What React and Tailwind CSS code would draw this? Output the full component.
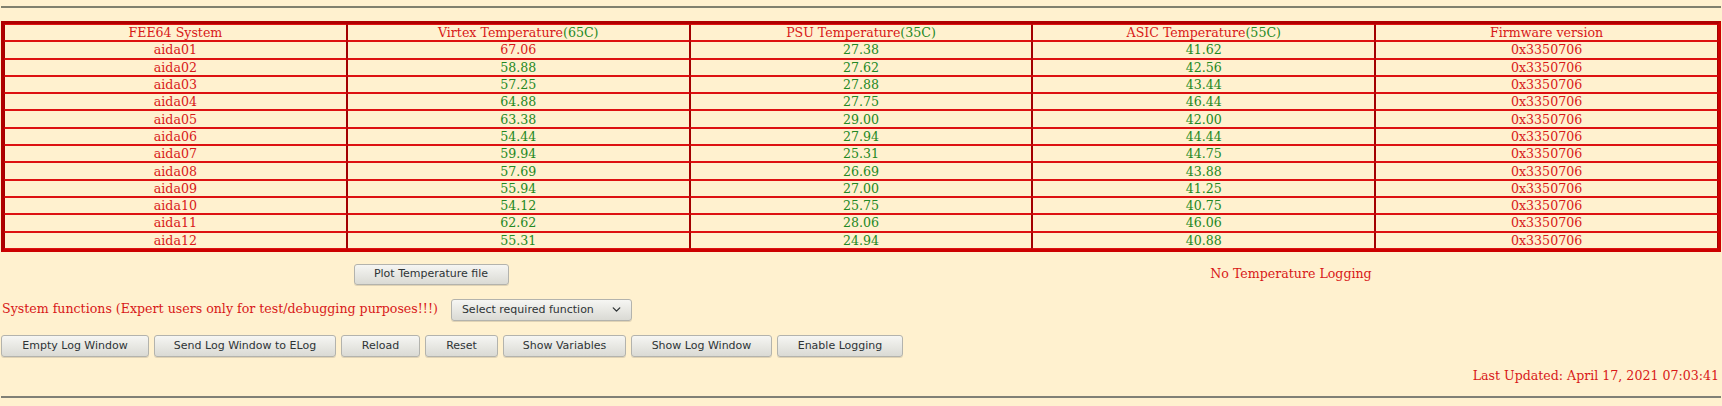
import { ChevronDown } from "lucide-react";

const rows = [
  ["aida01", "67.06", "27.38", "41.62"],
  ["aida02", "58.88", "27.62", "42.56"],
  ["aida03", "57.25", "27.88", "43.44"],
  ["aida04", "64.88", "27.75", "46.44"],
  ["aida05", "63.38", "29.00", "42.00"],
  ["aida06", "54.44", "27.94", "44.44"],
  ["aida07", "59.94", "25.31", "44.75"],
  ["aida08", "57.69", "26.69", "43.88"],
  ["aida09", "55.94", "27.00", "41.25"],
  ["aida10", "54.12", "25.75", "40.75"],
  ["aida11", "62.62", "28.06", "46.06"],
  ["aida12", "55.31", "24.94", "40.88"],
];

const limits = [65, 35, 55];

const cell =
  "h-[17.3px] p-0 text-center leading-[15px] border-t border-b border-t-[#dd1111] border-b-[#dd1111] border-l border-r border-l-[#a30000] border-r-[#a30000]";

const Btn = ({ children, w, h = "h-[21px]" }) => (
  <button
    className={`${h} ${w} rounded-[3px] border border-[#b3b3ad] bg-linear-to-b from-[#f6f6f3] to-[#dadad4] text-[11px] text-[#2e3436] shadow-[0_1px_0_rgba(0,0,0,0.12)]`}
    style={{ fontFamily: '"DejaVu Sans", sans-serif' }}
  >
    {children}
  </button>
);

const App = () => {
  return (
    <div
      className="min-h-[406px] w-full bg-[#fff1cf] px-[1px] pt-[6px] text-[12.6px] text-[#d81818]"
      style={{ fontFamily: '"DejaVu Serif", serif' }}
    >
      <div className="h-[2px] w-full bg-[#80806e]" />

      {/* temperature table */}
      <table className="mt-[13px] w-full table-fixed border-separate border-spacing-0 border-[3px] border-[#cc0000] border-t-[#b00000] border-l-[#b00000]">
        <tbody>
          <tr>
            <td className={cell}>FEE64 System</td>
            <td className={cell}>
              Virtex Temperature<span className="text-[#238823]">(65C)</span>
            </td>
            <td className={cell}>
              PSU Temperature<span className="text-[#238823]">(35C)</span>
            </td>
            <td className={cell}>
              ASIC Temperature<span className="text-[#238823]">(55C)</span>
            </td>
            <td className={cell}>Firmware version</td>
          </tr>
          {rows.map((r) => (
            <tr key={r[0]}>
              <td className={cell}>{r[0]}</td>
              {r.slice(1).map((v, i) => (
                <td
                  key={i}
                  className={`${cell} ${
                    parseFloat(v) > limits[i] ? "text-[#d81818]" : "text-[#238823]"
                  }`}
                >
                  {v}
                </td>
              ))}
              <td className={cell}>0x3350706</td>
            </tr>
          ))}
        </tbody>
      </table>

      {/* plot / logging state */}
      <div className="mt-[12px] flex items-center">
        <div className="flex w-1/2 justify-center">
          <Btn w="w-[155px]">Plot Temperature file</Btn>
        </div>
        <div className="flex w-1/2 justify-center">No Temperature Logging</div>
      </div>

      {/* system functions */}
      <div className="mt-[14px] flex items-center gap-[13px] pl-[1px]">
        <span>System functions (Expert users only for test/debugging purposes!!!)</span>
        <div
          className="flex h-[22px] w-[181px] items-center justify-between rounded-[3px] border border-[#b3b3ad] bg-linear-to-b from-[#f6f6f3] to-[#dadad4] pl-[10px] pr-[8px] text-[11px] text-[#2e3436] shadow-[0_1px_0_rgba(0,0,0,0.12)]"
          style={{ fontFamily: '"DejaVu Sans", sans-serif' }}
        >
          <span>Select required function</span>
          <ChevronDown size={13} strokeWidth={2.5} />
        </div>
      </div>

      {/* log buttons */}
      <div className="mt-[14px] flex gap-[5px]">
        <Btn h="h-[22px]" w="w-[148px]">Empty Log Window</Btn>
        <Btn h="h-[22px]" w="w-[182px]">Send Log Window to ELog</Btn>
        <Btn h="h-[22px]" w="w-[79px]">Reload</Btn>
        <Btn h="h-[22px]" w="w-[73px]">Reset</Btn>
        <Btn h="h-[22px]" w="w-[123px]">Show Variables</Btn>
        <Btn h="h-[22px]" w="w-[141px]">Show Log Window</Btn>
        <Btn h="h-[22px]" w="w-[126px]">Enable Logging</Btn>
      </div>

      <div className="mt-[11px] pr-[2px] text-right leading-[15px]">
        Last Updated: April 17, 2021 07:03:41
      </div>

      <div className="mt-[13px] h-[2px] w-full bg-[#808076]" />
    </div>
  );
};

export default App;
